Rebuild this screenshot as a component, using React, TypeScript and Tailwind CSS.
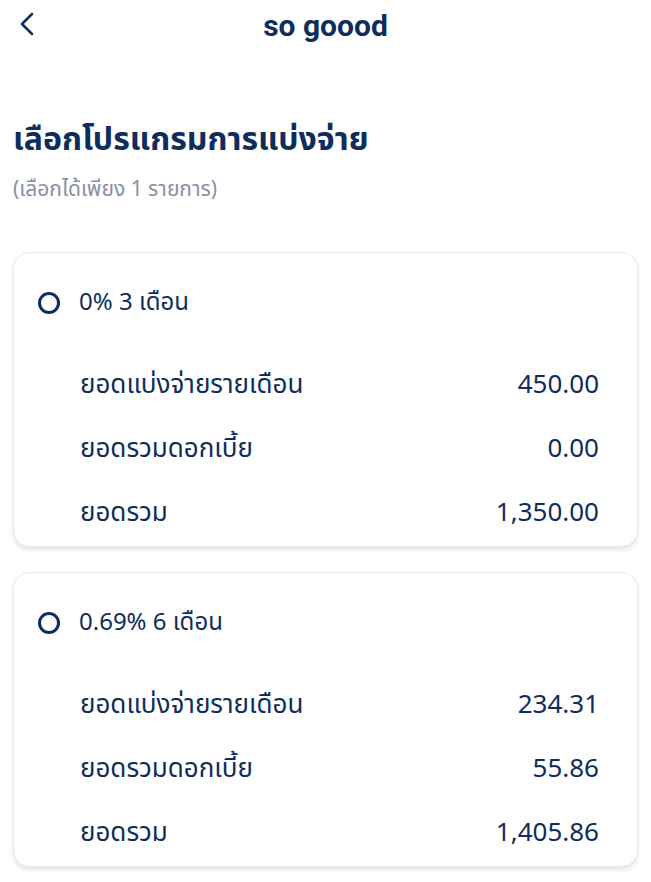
import { ChevronLeft } from "lucide-react";

type Plan = {
  name: string;
  rows: { label: string; value: string }[];
};

const PLANS: Plan[] = [
  {
    name: "0% 3 เดือน",
    rows: [
      { label: "ยอดแบ่งจ่ายรายเดือน", value: "450.00" },
      { label: "ยอดรวมดอกเบี้ย", value: "0.00" },
      { label: "ยอดรวม", value: "1,350.00" },
    ],
  },
  {
    name: "0.69% 6 เดือน",
    rows: [
      { label: "ยอดแบ่งจ่ายรายเดือน", value: "234.31" },
      { label: "ยอดรวมดอกเบี้ย", value: "55.86" },
      { label: "ยอดรวม", value: "1,405.86" },
    ],
  },
];

function PlanCard({ plan }: { plan: Plan }) {
  return (
    <div className="rounded-[16px] border border-[#e4e8ef] bg-white pb-[1px] shadow-[0_3px_4px_rgba(20,40,80,0.12)]">
      <div className="mt-[30px] flex h-[40px] items-center pl-[24px]">
        <span className="h-[22px] w-[22px] rounded-full border-[3px] border-[#0e2d5c]" />
        <span className="ml-[19px] text-[24px] text-[#0e2d5c]">{plan.name}</span>
      </div>
      <div className="mt-[30px]">
        {plan.rows.map((r) => (
          <div
            key={r.label}
            className="flex h-[64px] items-center justify-between pl-[66px] pr-[38px] text-[26px] text-[#0e2d5c]"
          >
            <span>{r.label}</span>
            <span>{r.value}</span>
          </div>
        ))}
      </div>
    </div>
  );
}

export default function App() {
  return (
    <div className="min-h-[882px] w-[651px] bg-white font-['Noto_Sans_Thai','Noto_Sans',sans-serif]">
      {/* top bar */}
      <div className="relative flex h-[50px] items-center justify-center">
        <ChevronLeft
          className="absolute left-[7px] top-[4px] h-[40px] w-[40px] text-[#0e2d5c]"
          strokeWidth={1.5}
        />
        <span className="font-['Roboto',sans-serif] text-[30px] font-bold text-[#0e2d5c]">so goood</span>
      </div>

      <div className="px-[13px]">
        <h1 className="mt-[68px] text-[32px] font-bold leading-[44px] text-[#0e2d5c]">เลือกโปรแกรมการแบ่งจ่าย</h1>
        <p className="mt-[14px] text-[21px] leading-[28px] text-[#8790a3]">(เลือกได้เพียง 1 รายการ)</p>

        <div className="mt-[48px] flex flex-col gap-[25px]">
          {PLANS.map((p) => (
            <PlanCard key={p.name} plan={p} />
          ))}
        </div>
      </div>
    </div>
  );
}
